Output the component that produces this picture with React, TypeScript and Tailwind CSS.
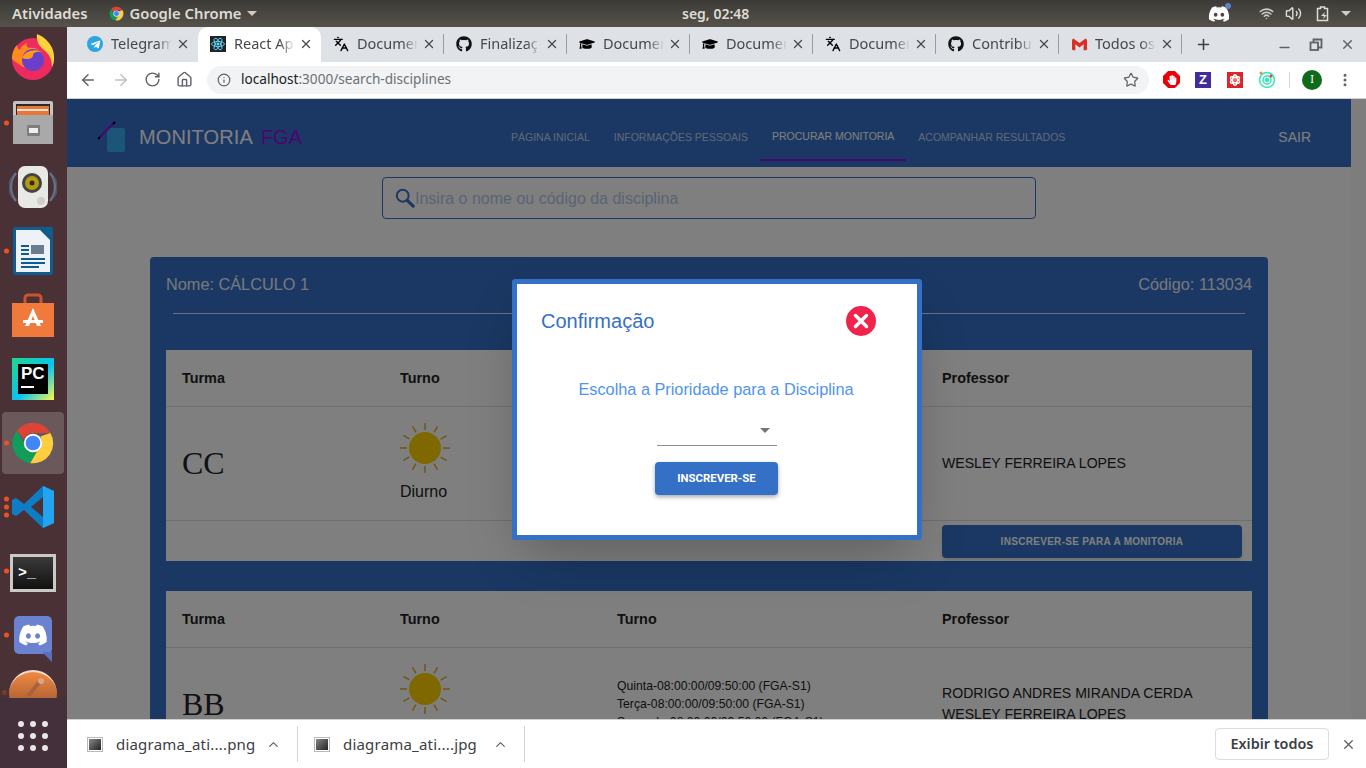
import {
  ArrowLeft,
  ArrowRight,
  ChevronUp,
  EllipsisVertical,
  Home,
  Info,
  Languages,
  Minus,
  Plus,
  RotateCw,
  Star,
  Volume2,
  Wifi,
  X,
} from "lucide-react";
import { FaAtom, FaDiscord, FaGithub, FaGraduationCap, FaHandPaper, FaTelegramPlane } from "react-icons/fa";
import { SiGmail } from "react-icons/si";
import type { ReactNode } from "react";

function ChromeLogo({ size = 44 }: { size?: number }) {
  return (
    <svg width={size} height={size} viewBox="0 0 48 48">
      <path d="M24 2a22 22 0 0 1 19 11H24a11 11 0 0 0-10 6.500L6.500 10.500A22 22 0 0 1 24 2z" fill="#db4437" />
      <path d="M6.500 10.500L16 27a10 10 0 0 0 12.500 6.500L21 46A22 22 0 0 1 6.500 10.500z" fill="#0f9d58" />
      <path d="M43 13a22 22 0 0 1-22 33l9.500-16.500A11 11 0 0 0 32 17z" fill="#ffcd40" />
      <circle cx="24" cy="24" r="10" fill="#fff" />
      <circle cx="24" cy="24" r="8" fill="#4285f4" />
    </svg>
  );
}

function Tab({
  icon,
  title,
  active,
  divider = true,
}: {
  icon: ReactNode;
  title: string;
  active?: boolean;
  divider?: boolean;
}) {
  return (
    <div
      className={`relative flex h-[35px] w-[123px] shrink-0 items-center pb-[1px] pl-[12px] pr-[8px] ${
        active ? "rounded-t-[10px] bg-white" : ""
      }`}
    >
      <span className="flex h-4 w-4 shrink-0 items-center justify-center">{icon}</span>
      <span className="ml-[8px] w-[61px] overflow-hidden whitespace-nowrap text-[14.5px] text-[#45484d] [mask-image:linear-gradient(to_right,#000_75%,transparent)]">
        {title}
      </span>
      <X size={14} strokeWidth={2.2} className="ml-auto shrink-0 text-[#45484d]" />
      {divider && <span className="absolute right-0 top-[7px] h-5 w-px bg-[#9a9ca1]" />}
    </div>
  );
}

function DockDot({ count = 1 }: { count?: number }) {
  return (
    <div className="absolute left-[2px] top-1/2 flex -translate-y-1/2 flex-col gap-[3px]">
      {Array.from({ length: count }).map((_, i) => (
        <span key={i} className="h-[5px] w-[5px] rounded-full bg-[#e95420]" />
      ))}
    </div>
  );
}

function DockItem({ children, dots = 0, active }: { children: ReactNode; dots?: number; active?: boolean }) {
  return (
    <div
      className={`relative mx-[2px] flex h-[62px] w-[62px] shrink-0 items-center justify-center rounded ${
        active ? "bg-[#6b585a]" : ""
      }`}
    >
      {dots > 0 && <DockDot count={dots} />}
      {children}
    </div>
  );
}

function Dock() {
  return (
    <aside className="flex h-full w-[67px] shrink-0 flex-col overflow-hidden bg-[#4a3136] pt-[1px]">
      <div className="flex flex-col gap-[2px]">
        <DockItem>
          <svg width="46" height="46" viewBox="0 0 46 46" className="-translate-y-[2px]">
            <circle cx="23" cy="25" r="21" fill="#ee2a5e" />
            <path d="M2 25c0-6 2-11 5-14 0 2 1 4 3 5 1-4 4-6 7-7-1 3 0 4 2 5 6-1 12 2 14 8 1 6-3 13-11 13-7 0-13-4-20-10z" fill="#ff8a1f" />
            <path d="M27 0c8 3 18 12 17 25 0 3-1 6-2 8 0-8-3-13-8-17-5-4-8-9-7-16z" fill="#ffd23a" />
            <circle cx="23" cy="26" r="11" fill="#6a3fc9" />
            <path d="M12 24c3-7 12-10 20-6-5-1-9 1-9 3 0 4-6 5-11 3z" fill="#ff9a1f" />
          </svg>
        </DockItem>
        <DockItem dots={1}>
          <svg width="40" height="43" viewBox="0 0 40 43" className="-translate-y-[1px]">
            <rect x="0" y="0" width="40" height="43" rx="2" fill="#c4c4c4" />
            <rect x="3" y="3" width="34" height="11" fill="#2e2a28" />
            <rect x="4" y="5" width="32" height="9" fill="#e8783a" />
            <rect x="4" y="8" width="31" height="2" fill="#f4e3d0" />
            <rect x="0" y="14" width="40" height="29" fill="#a9a9a9" />
            <rect x="14" y="24" width="13" height="11" rx="1" fill="#7d7d7d" />
            <rect x="16" y="27" width="9" height="5" fill="#eee" />
          </svg>
        </DockItem>
        <DockItem>
          <svg width="48" height="44" viewBox="0 0 48 44">
            <path d="M7 8a22 22 0 0 0 0 28M41 8a22 22 0 0 1 0 28" stroke="#66708a" strokeWidth="2.500" fill="none" />
            <path d="M3 12a18 18 0 0 0 0 20M45 12a18 18 0 0 1 0 20" stroke="#55566a" strokeWidth="1.500" fill="none" />
            <rect x="9" y="1" width="30" height="42" rx="7" fill="#e8e8e4" />
            <circle cx="23" cy="18" r="10" fill="#45453f" />
            <circle cx="23" cy="18" r="7" fill="#b49a14" />
            <circle cx="23" cy="18" r="2.500" fill="#2e2c20" />
            <circle cx="32" cy="36" r="4" fill="#cfcfca" />
          </svg>
        </DockItem>
        <DockItem dots={1}>
          <svg width="40" height="48" viewBox="0 0 40 48">
            <path d="M2 0h26l12 12v34a2 2 0 0 1-2 2H2a2 2 0 0 1-2-2V2a2 2 0 0 1 2-2z" fill="#0f5c8f" />
            <path d="M3 3h24l10 10v32H3z" fill="#eef2f6" />
            <path d="M28 0h10a2 2 0 0 1 2 2v10z" fill="#0f5c8f" />
            <rect x="8" y="18" width="8" height="2" fill="#0f5c8f" />
            <rect x="8" y="22" width="8" height="2" fill="#0f5c8f" />
            <rect x="8" y="26" width="8" height="2" fill="#0f5c8f" />
            <rect x="18" y="18" width="13" height="9" fill="#6a7d8e" />
            <rect x="8" y="31" width="24" height="2" fill="#0f5c8f" />
            <rect x="8" y="35" width="24" height="2" fill="#0f5c8f" />
            <rect x="8" y="39" width="18" height="2" fill="#0f5c8f" />
          </svg>
        </DockItem>
        <DockItem>
          <svg width="42" height="44" viewBox="0 0 42 44">
            <path d="M13 10V5a3 3 0 0 1 3-3h10a3 3 0 0 1 3 3v5" stroke="#c8562a" strokeWidth="3" fill="none" />
            <path d="M0 10h42v34H0z" fill="#ef7a3c" />
            <path d="M21 15l8 18h-4l-4-10-4 10h-4z" fill="#fff" />
            <rect x="11" y="27" width="20" height="3" fill="#fff" />
          </svg>
        </DockItem>
        <DockItem>
          <div className="relative h-[42px] w-[42px] bg-[linear-gradient(135deg,#21d789,#07c3f2_55%,#fcf84a)]">
            <div className="absolute inset-[6px] flex flex-col bg-black px-[3px] font-['Liberation_Sans',sans-serif] text-[17px] font-bold leading-[19px] text-white">
              PC
              <span className="mt-[3px] h-[2px] w-[13px] bg-white" />
            </div>
          </div>
        </DockItem>
        <DockItem dots={1} active>
          <ChromeLogo />
        </DockItem>
        <DockItem dots={3}>
          <svg width="44" height="44" viewBox="0 0 44 44">
            <path d="M32 1l11 5v32l-11 5L13 25l-8 6-4-2 0-14 4-2 8 6z" fill="#0f7dc4" />
            <path d="M32 1l11 5v32l-11 5z" fill="#23a4f0" />
            <path d="M32 12L20 22l12 10z" fill="#4a3136" />
          </svg>
        </DockItem>
        <DockItem dots={1}>
          <div className="flex h-[38px] w-[46px] translate-y-[2px] items-center border-[3px] border-[#c9c9c5] bg-[linear-gradient(#3a3a3a,#111)] px-[5px]">
            <span className="font-['Liberation_Mono',monospace] text-[15px] font-bold leading-none text-white">&gt;_</span>
          </div>
        </DockItem>
        <DockItem dots={1}>
          <div className="relative flex h-[38px] w-[38px] items-center justify-center rounded-[5px] bg-[#6a82d0]">
            <FaDiscord size={30} className="text-white" />
            <span className="absolute -bottom-[8px] right-0 h-0 w-0 border-l-[10px] border-t-[10px] border-l-transparent border-t-[#5a70b8]" />
          </div>
        </DockItem>
      </div>
      <div className="relative flex-1 overflow-hidden">
        <div className="absolute left-[9px] top-[4px] h-[48px] w-[48px] rounded-full border-t-2 border-white/80 bg-[linear-gradient(#f08a40,#8a4a30)]" />
        <svg width="24" height="24" viewBox="0 0 24 24" className="absolute left-[22px] top-[10px]">
          <path d="M20 3L6 20" stroke="#a8623e" strokeWidth="4" />
          <circle cx="19" cy="5" r="3" fill="#d9a58a" />
        </svg>
        <span className="absolute left-[2px] top-[24px] h-[5px] w-[5px] rounded-full bg-[#7a3a2a]" />
        <div className="absolute bottom-0 left-0 flex h-[70px] w-full items-center justify-center bg-[#43303a] pr-[1px] pt-[6px]">
          <div className="grid grid-cols-3 gap-x-[6px] gap-y-[6px]">
            {Array.from({ length: 9 }).map((_, i) => (
              <span key={i} className="h-[6px] w-[6px] rounded-full bg-[#e8e6e6]" />
            ))}
          </div>
        </div>
      </div>
    </aside>
  );
}

function SunIcon() {
  const rays = [0, 30, 60, 90, 120, 150, 180, 210, 240, 270, 300, 330];
  return (
    <svg width={50} height={50} viewBox="0 0 50 50" className="block">
      {rays.map((r) => (
        <rect key={r} x="24.300" y="0" width="1.500" height="7" fill="#dcb020" transform={`rotate(${r} 25 25)`} />
      ))}
      <circle cx="25" cy="25" r="16" fill="#ffd000" />
    </svg>
  );
}

function CourseTable({
  group,
  schedule,
  teachers,
  button,
}: {
  group: string;
  schedule: string[];
  teachers: string[];
  button?: boolean;
}) {
  return (
    <div className="bg-white font-['Liberation_Sans',sans-serif] text-[#222]">
      <div className="grid h-[57px] grid-cols-[218px_217px_325px_1fr] items-center border-b border-[#ddd] pl-[16px] pr-[8px] pt-[2px] text-[14.4px] font-bold">
        <span>Turma</span>
        <span>Turno</span>
        <span>Turno</span>
        <span>Professor</span>
      </div>
      <div className="grid h-[114px] grid-cols-[218px_217px_325px_1fr] items-center border-b border-[#ddd] pl-[16px] pr-[8px]">
        <span className="mb-[2px] font-['Liberation_Serif',serif] text-[32px] leading-none">{group}</span>
        <div className="mb-[3px] flex flex-col items-start">
          <SunIcon />
          <span className="mt-[9px] text-[16px] leading-[20px]">Diurno</span>
        </div>
        <div className="mb-[2px] text-[12.2px] leading-[18px]">
          {schedule.map((s) => (
            <div key={s}>{s}</div>
          ))}
        </div>
        <div className={`text-[14.1px] leading-[21px] ${teachers.length > 1 ? "mb-[2px]" : ""}`}>
          {teachers.map((t) => (
            <div key={t}>{t}</div>
          ))}
        </div>
      </div>
      {button && (
        <div className="flex h-[40px] items-center justify-end pr-[10px]">
          <div className="flex h-[33px] w-[300px] items-center justify-center rounded bg-[#3570c7] text-[10px] font-bold tracking-[0.3px] text-white shadow-md">
            INSCREVER-SE PARA A MONITORIA
          </div>
        </div>
      )}
    </div>
  );
}

function Page() {
  return (
    <div className="h-full bg-white font-['Liberation_Sans',sans-serif]">
      <div className="flex h-full">
        <div className="min-w-0 flex-1">
          <header className="flex h-[68px] items-center bg-[#3570c7] pl-[31px] pr-[40px] text-white">
            <div className="flex items-center pt-[8px]">
              <svg width="30" height="32" viewBox="0 0 30 32" className="shrink-0">
                <rect x="9" y="7" width="18" height="24" rx="2" fill="#36aaf0" />
                <path d="M1 17L17 1" stroke="#960ae0" strokeWidth="2" />
                <path d="M0 18l2-2M15 3l2-2" stroke="#000" strokeWidth="2" />
              </svg>
              <span className="ml-[11px] text-[20px] tracking-[0.1px]">MONITORIA</span>
              <span className="ml-[8px] text-[20px] text-[#960ae0]">FGA</span>
            </div>
            <nav className="mb-[6px] ml-[197px] flex h-[48px] self-end text-[10.5px] text-white/70">
              <span className="flex items-center px-[12px] pt-[1px]">PÁGINA INICIAL</span>
              <span className="flex items-center px-[12px] pt-[1px]">INFORMAÇÕES PESSOAIS</span>
              <span className="flex items-center border-b-2 border-[#960ae0] px-[12px] pt-[1px] text-white">
                PROCURAR MONITORIA
              </span>
              <span className="flex items-center px-[12px] pt-[1px]">ACOMPANHAR RESULTADOS</span>
            </nav>
            <span className="ml-auto pt-[8px] text-[14px]">SAIR</span>
          </header>
          <div className="pt-[10px]">
            <div className="ml-[315px] flex h-[42px] w-[654px] items-center rounded border border-[#3570c7] pl-[12px]">
              <svg width="20" height="22" viewBox="0 0 22 22" className="shrink-0">
                <circle cx="8.500" cy="8.500" r="6.500" fill="none" stroke="#3570c7" strokeWidth="2.200" />
                <path d="M13.500 13.500L20 20" stroke="#3570c7" strokeWidth="3.500" strokeLinecap="round" />
              </svg>
              <span className="pt-[2px] text-[16px] text-[#b4c8e8]">Insira o nome ou código da disciplina</span>
            </div>
            <section className="ml-[83px] mt-[38px] w-[1118px] rounded-t bg-[#3570c7] px-[16px] pb-[1px]">
              <div className="flex h-[56px] items-center justify-between pb-[2px] text-[16.3px] text-white/90">
                <span>Nome: CÁLCULO 1</span>
                <span>Código: 113034</span>
              </div>
              <div className="mx-[7px] h-px bg-white/80" />
              <div className="mt-[36px]">
                <CourseTable group="CC" schedule={[]} teachers={["WESLEY FERREIRA LOPES"]} button />
              </div>
              <div className="mt-[30px]">
                <CourseTable
                  group="BB"
                  schedule={[
                    "Quinta-08:00:00/09:50:00 (FGA-S1)",
                    "Terça-08:00:00/09:50:00 (FGA-S1)",
                    "Segunda-08:00:00/09:50:00 (FGA-S1)",
                  ]}
                  teachers={["RODRIGO ANDRES MIRANDA CERDA", "WESLEY FERREIRA LOPES"]}
                />
              </div>
            </section>
          </div>
        </div>
        <div className="w-[15px] shrink-0 bg-[#fafafa]" />
      </div>
    </div>
  );
}

function ConfirmModal() {
  return (
    <div className="absolute left-[445px] top-[180px] h-[261px] w-[410px] rounded-[3px] border-[5px] border-[#3570c7] bg-white font-['Liberation_Sans',sans-serif] shadow-2xl">
      <div className="flex items-center justify-between pl-[24px] pr-[41px] pt-[22px]">
        <span className="text-[20px] leading-[30px] text-[#3570c7]">Confirmação</span>
        <svg width="30" height="30" viewBox="0 0 30 30">
          <circle cx="15" cy="15" r="15" fill="#f0234a" />
          <path d="M9.500 9.500l11 11M20.500 9.500l-11 11" stroke="#fff" strokeWidth="3.500" strokeLinecap="round" />
        </svg>
      </div>
      <p className="mt-[42px] pr-[2px] text-center text-[16.3px] leading-[22px] text-[#4f94f0]">
        Escolha a Prioridade para a Disciplina
      </p>
      <div className="mx-auto mt-[9px] flex h-[37px] w-[120px] items-center justify-end border-b border-[#8d8d8d] pr-[7px] pt-[6px]">
        <span className="h-0 w-0 border-x-[5px] border-t-[5px] border-x-transparent border-t-[#757575]" />
      </div>
      <div className="ml-[138px] mt-[16px] flex h-[33px] w-[123px] items-center justify-center rounded bg-[#3570c7] font-['Roboto',sans-serif] text-[11.4px] font-bold text-white shadow-[0_2px_4px_rgba(0,0,0,0.35)]">
        INSCREVER-SE
      </div>
    </div>
  );
}

function DownloadItem({ name, width, pad }: { name: string; width: string; pad: string }) {
  return (
    <div className={`flex h-[36px] items-center border-r border-[#d5d5d5] ${pad} ${width}`}>
      <span className="flex h-[15px] w-[16px] items-center justify-center border border-[#b9b9b9] bg-white">
        <span className="h-[11px] w-[12px] bg-[linear-gradient(135deg,#888,#222)]" />
      </span>
      <span className="ml-[13px] font-['Noto_Sans',sans-serif] text-[15px] tracking-[0.2px] text-[#3c4043]">{name}</span>
      <ChevronUp size={15} className="ml-auto mr-[16px] text-[#5f6368]" />
    </div>
  );
}

export default function App() {
  return (
    <div className="flex h-[768px] w-[1366px] flex-col overflow-hidden font-['Noto_Sans',sans-serif]">
      {/* Top bar */}
      <div className="relative flex h-[27px] shrink-0 items-center bg-[linear-gradient(#3c3b37,#55524a)] pl-[12px] text-[14.8px] font-semibold text-[#dfdcd6]">
        <span>Atividades</span>
        <span className="ml-[21px]">
          <ChromeLogo size={15} />
        </span>
        <span className="ml-[6px]">Google Chrome</span>
        <span className="ml-[5px] h-0 w-0 border-x-[5px] border-t-[5px] border-x-transparent border-t-[#cfccc6]" />
        <span className="absolute left-[682px] top-[3px] text-[14px]">seg, 02:48</span>
        <div className="absolute right-[15px] top-0 flex h-full items-center">
          <span className="relative mr-[29px]">
            <FaDiscord size={22} className="text-white" />
            <span className="absolute -right-[1px] top-0 h-[6px] w-[6px] rounded-full bg-[#5f7fd0]" />
          </span>
          <Wifi size={15} strokeWidth={2.5} className="mr-[11px] text-[#cfccc6]" />
          <Volume2 size={17} className="mr-[14px] text-[#dfdcd6]" />
          <svg width="14" height="17" viewBox="0 0 14 17" className="mr-[11px]">
            <path d="M1.500 3.500h3V2h4v1.500h3v12h-10z" fill="none" stroke="#dfdcd6" strokeWidth="1.500" />
            <path d="M9 7l-4 4h3l-1 3 4-4H8z" fill="#dfdcd6" />
          </svg>
          <span className="h-0 w-0 border-x-[5px] border-t-[5px] border-x-transparent border-t-[#cfccc6]" />
        </div>
      </div>

      <div className="flex min-h-0 flex-1">
        <Dock />
        <div className="flex min-w-0 flex-1 flex-col">
          {/* Tabs */}
          <div className="flex h-[35px] shrink-0 items-center bg-[#dee1e6] pl-[8px]">
            <Tab
              title="Telegram"
              divider={false}
              icon={
                <span className="flex h-4 w-4 items-center justify-center rounded-full bg-[#2ca5e0]">
                  <FaTelegramPlane size={11} className="text-white" />
                </span>
              }
            />
            <Tab
              title="React App"
              active
              divider={false}
              icon={
                <span className="flex h-4 w-4 items-center justify-center bg-[#20232a]">
                  <svg width="14" height="14" viewBox="0 0 24 24" fill="none" stroke="#61dafb" strokeWidth="1.500">
                    <ellipse cx="12" cy="12" rx="11" ry="4.500" />
                    <ellipse cx="12" cy="12" rx="11" ry="4.500" transform="rotate(60 12 12)" />
                    <ellipse cx="12" cy="12" rx="11" ry="4.500" transform="rotate(120 12 12)" />
                    <circle cx="12" cy="12" r="2" fill="#61dafb" />
                  </svg>
                </span>
              }
            />
            <Tab title="Documen" icon={<Languages size={16} className="text-black" />} />
            <Tab title="Finalizaç" icon={<FaGithub size={16} className="text-[#111]" />} />
            <Tab title="Documen" icon={<FaGraduationCap size={16} className="text-black" />} />
            <Tab title="Documen" icon={<FaGraduationCap size={16} className="text-black" />} />
            <Tab title="Documen" icon={<Languages size={16} className="text-black" />} />
            <Tab title="Contribu" icon={<FaGithub size={16} className="text-[#111]" />} />
            <Tab title="Todos os" icon={<SiGmail size={15} className="text-[#d93025]" />} />
            <Plus size={17} strokeWidth={2.2} className="ml-[13px] text-[#3c4043]" />
            <div className="ml-auto flex items-center gap-[17px] pr-[11px] text-[#5f6368]">
              <Minus size={15} strokeWidth={2.5} className="translate-y-[3px]" />
              <svg width="14" height="14" viewBox="0 0 14 14" fill="none" stroke="currentColor" strokeWidth="1.800">
                <rect x="1.500" y="4.500" width="7.500" height="7.500" />
                <path d="M4.500 4.500V1.500h8V9.500H9" />
              </svg>
              <X size={15} strokeWidth={2.2} />
            </div>
          </div>

          {/* Toolbar */}
          <div className="flex h-[37px] shrink-0 items-center border-b border-[#cfd0d3] bg-white pb-[1px] pl-[12px] text-[#5f6368]">
            <ArrowLeft size={18} strokeWidth={2} />
            <ArrowRight size={18} strokeWidth={2} className="ml-[15px] text-[#bdc1c6]" />
            <RotateCw size={17} strokeWidth={2} className="ml-[14px]" />
            <Home size={17} strokeWidth={2} className="ml-[15px]" />
            <div className="ml-[14px] flex h-[28px] w-[942px] items-center rounded-full bg-[#f1f3f4] pl-[10px] pr-[10px]">
              <Info size={14} strokeWidth={2} />
              <span className="ml-[10px] text-[13.6px] text-[#202124]">
                localhost<span className="text-[#6c7075]">:3000/search-disciplines</span>
              </span>
              <Star size={16} strokeWidth={1.8} className="ml-auto" />
            </div>
            <div className="ml-[14px] flex h-[17px] w-[17px] items-center justify-center bg-[#e8000b] text-white [clip-path:polygon(30%_0,70%_0,100%_30%,100%_70%,70%_100%,30%_100%,0_70%,0_30%)]">
              <FaHandPaper size={10} />
            </div>
            <div className="ml-[15px] flex h-4 w-4 items-center justify-center bg-[#3f2e9e] font-['Liberation_Sans',sans-serif] text-[13px] font-bold text-white">
              Z
            </div>
            <div className="ml-[16px] flex h-4 w-4 items-center justify-center bg-[#d9262c] text-white">
              <FaAtom size={12} />
            </div>
            <svg width="18" height="18" viewBox="0 0 18 18" fill="none" stroke="#30e8b8" strokeWidth="1.500" className="ml-[15px]">
              <circle cx="9" cy="9" r="7.500" />
              <circle cx="9" cy="9" r="4" />
              <circle cx="9" cy="9" r="1.500" fill="#30e8b8" />
              <circle cx="3" cy="2" r="1.500" fill="#f08a30" stroke="none" />
              <circle cx="13" cy="5" r="1.500" fill="#e8403a" stroke="none" />
            </svg>
            <span className="ml-[13px] h-[16px] w-px bg-[#d4d4d4]" />
            <div className="ml-[12px] flex h-5 w-5 items-center justify-center rounded-full bg-[#0f6b1a] text-[11px] text-white">I</div>
            <EllipsisVertical size={16} strokeWidth={2.5} className="ml-[15px]" />
          </div>

          {/* Page and modal */}
          <div className="relative min-h-0 flex-1 overflow-hidden">
            <Page />
            <div className="absolute inset-0 bg-black/50" />
            <ConfirmModal />
          </div>

          {/* Downloads */}
          <div className="flex h-[49px] shrink-0 items-center border-t border-[#d0d0d0] bg-white">
            <DownloadItem name="diagrama_ati....png" width="w-[231px]" pad="pl-[20px]" />
            <DownloadItem name="diagrama_ati....jpg" width="w-[227px]" pad="pl-[16px]" />
            <div className="ml-auto flex items-center pr-[10px]">
              <div className="flex h-[32px] w-[114px] items-center justify-center rounded-[4px] border border-[#dadce0] text-[14.4px] font-semibold text-[#3c4043]">
                Exibir todos
              </div>
              <X size={15} strokeWidth={2.2} className="ml-[12px] text-[#5f6368]" />
            </div>
          </div>
        </div>
      </div>
    </div>
  );
}
